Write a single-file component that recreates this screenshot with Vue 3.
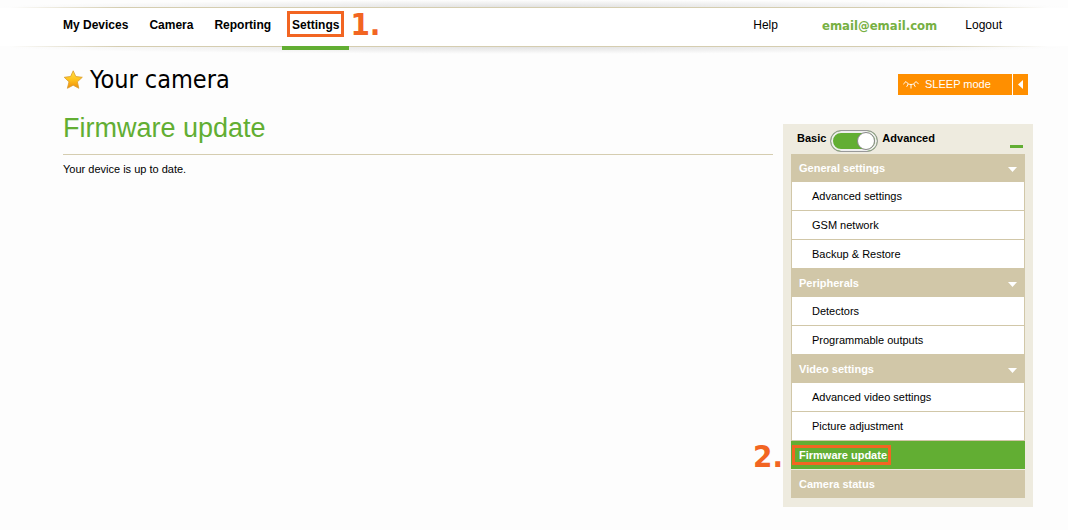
<script setup>
import { ref } from 'vue'

const advanced = ref(true)

const links = [
  { label: 'My Devices' },
  { label: 'Camera' },
  { label: 'Reporting' },
  { label: 'Settings', active: true, step: '1.' },
]

const groups = [
  { label: 'General settings', items: ['Advanced settings', 'GSM network', 'Backup & Restore'] },
  { label: 'Peripherals', items: ['Detectors', 'Programmable outputs'] },
  { label: 'Video settings', items: ['Advanced video settings', 'Picture adjustment'] },
]
</script>

<template>
  <div class="page">
    <header class="topbar">
      <nav class="nav">
        <a v-for="link in links" :key="link.label" href="#" class="nav-link" :class="{ active: link.active }">
          {{ link.label }}
          <span v-if="link.step" class="frame frame-nav"></span>
          <span v-if="link.step" class="step step-nav">{{ link.step }}</span>
        </a>
      </nav>
      <div class="account">
        <a href="#" class="help">Help</a>
        <a href="#" class="email">email@email.com</a>
        <a href="#">Logout</a>
      </div>
    </header>

    <div class="title-row">
      <svg class="star" viewBox="0 0 20 20" aria-hidden="true">
        <defs>
          <linearGradient id="gold" x1="0" y1="0" x2="0" y2="1">
            <stop offset="0" stop-color="#ffe14a" />
            <stop offset="0.5" stop-color="#ffc31c" />
            <stop offset="1" stop-color="#ef8c0a" />
          </linearGradient>
        </defs>
        <path d="M10.200 .8 12.800 6.500 19.300 7.300 14.400 11.800 15.800 18.300 10.200 15.200 4.400 18.300 6 11.800 1.200 7.300 7.600 6.500Z" fill="url(#gold)" stroke="#d99a2b" stroke-width=".8" stroke-linejoin="round" />
      </svg>
      <h1>Your camera</h1>
      <div class="sleep">
        <button type="button" class="sleep-main">
          <svg viewBox="0 0 16 9" aria-hidden="true">
            <path d="M.3 4.200 3 1.500C4.500 3.700 6 4.500 8 4.500S11.500 3.700 13 1.500L15.700 4.200M5.200 4 3.700 6.800M8 4.500V8.500M10.800 4 12.300 6.800" fill="none" stroke="#fff" />
          </svg>
          SLEEP mode
        </button>
        <button type="button" class="sleep-toggle" aria-label="Open sleep options">
          <svg viewBox="0 0 5 9" aria-hidden="true"><path d="M5 0V9L0 4.500Z" fill="#fff" /></svg>
        </button>
      </div>
    </div>

    <div class="columns">
      <main>
        <h2>Firmware update</h2>
        <p>Your device is up to date.</p>
      </main>

      <aside>
        <div class="mode">
          <label for="mode">Basic</label>
          <input id="mode" v-model="advanced" type="checkbox" class="switch" />
          <label for="mode">Advanced</label>
          <button type="button" class="collapse" aria-label="Collapse menu"></button>
        </div>
        <section v-for="group in groups" :key="group.label">
          <button type="button" class="row">
            {{ group.label }}
            <svg viewBox="0 0 9 5" aria-hidden="true"><path d="M0 0H9L4.500 5Z" fill="#fff" /></svg>
          </button>
          <ul>
            <li v-for="item in group.items" :key="item"><a href="#">{{ item }}</a></li>
          </ul>
        </section>
        <a href="#" class="row current">
          Firmware update
          <span class="frame frame-row"></span>
          <span class="step step-row">2.</span>
        </a>
        <a href="#" class="row">Camera status</a>
      </aside>
    </div>
  </div>
</template>

<style>
body {
  margin: 0;
  background: #fdfdfd;
}
</style>

<style scoped>
.page {
  font-family: "Liberation Sans", Arial, sans-serif;
  font-size: 11px;
  color: #000;
  padding-bottom: 20px;
}
a {
  color: inherit;
  text-decoration: none;
}
button {
  font: inherit;
  border: 0;
  padding: 0;
  cursor: pointer;
}
.topbar {
  display: flex;
  justify-content: space-between;
  height: 60px;
  box-sizing: border-box;
  padding: 8px 66px 0 53px;
  font-size: 12px;
  line-height: 34px;
  background:
    linear-gradient(90deg, transparent 10px, #d5cdb0 120px, #d5cdb0 calc(100% - 130px), transparent calc(100% - 20px)) 0 7px / 100% 1px no-repeat,
    linear-gradient(90deg, transparent 10px, #d5cdb0 120px, #d5cdb0 calc(100% - 130px), transparent calc(100% - 20px)) 0 46px / 100% 1px no-repeat,
    linear-gradient(#fff, #fff) 0 8px / 100% 38px no-repeat,
    radial-gradient(ellipse 50% 100% at 50% 100%, #e2e2e2, transparent) 0 0 / 100% 7px no-repeat,
    radial-gradient(ellipse 50% 100% at 50% 0, #e2e2e2, transparent) 0 47px / 100% 7px no-repeat;
}
.nav,
.account {
  display: flex;
}
.nav {
  gap: 1px;
}
.nav-link {
  position: relative;
  height: 38px;
  padding: 0 10px;
  font-weight: bold;
}
.active {
  border-bottom: 4px solid #62ae33;
}
.help {
  margin-right: 44px;
}
.email {
  margin-right: 28px;
  font: bold 13px/35px "DejaVu Sans Condensed", "DejaVu Sans", sans-serif;
  color: #77b043;
}
.frame {
  position: absolute;
  box-sizing: border-box;
  border: 3px solid #f26522;
}
.frame-nav {
  inset: 3px 5px 9px;
}
.step {
  position: absolute;
  font: bold 31px/31px "DejaVu Sans Condensed", "DejaVu Sans", sans-serif;
  color: #f26522;
}
.step-nav {
  left: 100%;
  top: 1px;
  margin-left: 1px;
}
.title-row {
  display: flex;
  align-items: center;
  height: 40px;
  padding: 0 40px 0 63px;
}
.star {
  width: 20px;
  height: 20px;
}
h1 {
  flex: 1;
  margin: 0 0 0 7px;
  font: 25px/40px "DejaVu Sans Condensed", "DejaVu Sans", sans-serif;
}
.sleep {
  display: flex;
  gap: 1px;
  height: 21px;
  margin-top: 9px;
}
.sleep button {
  display: flex;
  align-items: center;
  background: #ff8f00;
  color: #fff;
}
.sleep .sleep-main {
  width: 114px;
  gap: 6px;
  padding: 0 0 1px 5px;
}
.sleep-main svg {
  width: 16px;
  height: 9px;
}
.sleep .sleep-toggle {
  width: 15px;
  justify-content: center;
}
.sleep-toggle svg {
  width: 5px;
  height: 9px;
}
.columns {
  display: flex;
  align-items: flex-start;
  gap: 10px;
  padding: 0 35px 0 63px;
}
main {
  flex: 1;
}
h2 {
  margin: 0;
  padding: 11px 0 9px;
  border-bottom: 1px solid #d5cdb0;
  font: 27px/34px "Liberation Sans", Arial, sans-serif;
  color: #62ae33;
}
p {
  margin: 7px 0;
  line-height: 14px;
}
aside {
  box-sizing: border-box;
  width: 250px;
  margin-top: 24px;
  padding: 0 8px 9px;
  background: #eeebdf;
}
.mode {
  display: flex;
  align-items: flex-start;
  height: 30px;
  padding: 0 2px 0 6px;
  font-weight: bold;
  line-height: 29px;
}
.switch {
  appearance: none;
  position: relative;
  width: 48px;
  height: 22px;
  margin: 6px 4px 0;
  border: 1px solid #999;
  border-radius: 11px;
  background: #62ae33;
  box-shadow: inset 0 0 0 2px #eee;
}
.switch::after {
  content: "";
  position: absolute;
  left: 2px;
  top: 1px;
  width: 16px;
  height: 16px;
  border: 1px solid #888;
  border-radius: 50%;
  background: #fff;
}
.switch:checked::after {
  left: auto;
  right: 2px;
}
.collapse {
  width: 13px;
  height: 3px;
  margin: 21px 0 0 auto;
  background: #62ae33;
}
.row {
  position: relative;
  display: flex;
  align-items: center;
  justify-content: space-between;
  width: 100%;
  height: 28px;
  box-sizing: border-box;
  padding: 0 8px;
  background: #d1c7a8;
  font-weight: bold;
  color: #fff;
}
.row svg {
  width: 9px;
  height: 5px;
  margin-top: 3px;
}
.current {
  margin-bottom: 1px;
  background: #62ae33;
}
ul {
  margin: 0;
  padding: 0;
  list-style: none;
  border: solid #d1c7a8;
  border-width: 0 1px;
  background: #fff;
}
li {
  border-bottom: 1px solid #d1c7a8;
}
li a {
  display: block;
  padding-left: 20px;
  line-height: 28px;
}
.frame-row {
  inset: 4px auto 4px 1px;
  width: 99px;
}
.step-row {
  right: 100%;
  margin-right: 8px;
  top: 0;
}
</style>
